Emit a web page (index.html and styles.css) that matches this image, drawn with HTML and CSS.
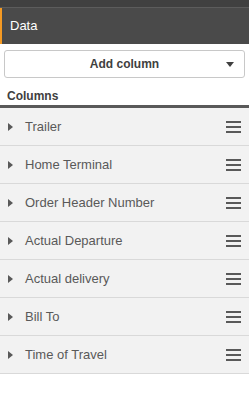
FILE: index.html
```html
<!DOCTYPE html>
<html>
<head lang="en">
    <meta charset="UTF-8">
    <title>Data</title>
    <link rel="stylesheet" href="styles.css">
</head>
<body>
<div id="panel">
    <div id="topbar"></div>
    <div id="header">Data</div>
    <div id="add">
        <span class="add-label">Add column</span>
        <span class="caret"></span>
    </div>
    <div id="title">Columns</div>
    <ul id="columns">
        <li><span class="arrow"></span><span class="name">Trailer</span><span class="drag"><i></i><i></i><i></i></span></li>
        <li><span class="arrow"></span><span class="name">Home Terminal</span><span class="drag"><i></i><i></i><i></i></span></li>
        <li><span class="arrow"></span><span class="name">Order Header Number</span><span class="drag"><i></i><i></i><i></i></span></li>
        <li><span class="arrow"></span><span class="name">Actual Departure</span><span class="drag"><i></i><i></i><i></i></span></li>
        <li><span class="arrow"></span><span class="name">Actual delivery</span><span class="drag"><i></i><i></i><i></i></span></li>
        <li><span class="arrow"></span><span class="name">Bill To</span><span class="drag"><i></i><i></i><i></i></span></li>
        <li><span class="arrow"></span><span class="name">Time of Travel</span><span class="drag"><i></i><i></i><i></i></span></li>
    </ul>
</div>
</body>
</html>
```

FILE: styles.css
```css
* {
    margin: 0;
    padding: 0;
    box-sizing: border-box;
}

ul {
    list-style: none;
}

body {
    background: #fff;
    font-family: "Liberation Sans", Arial, sans-serif;
    font-size: 13px;
}

#topbar {
    height: 8px;
    background-color: #404040;
    border-bottom: 1px solid #5c5c5c;
}

#header {
    height: 36px;
    padding-left: 8px;
    background-color: #4a4a4a;
    border-left: 2px solid #f59a23;
    color: #fff;
    line-height: 36px;
}

#add {
    display: flex;
    align-items: center;
    height: 28px;
    margin: 6px 4px 0;
    border: 1px solid #c8c8c8;
    border-radius: 3px;
    color: #404040;
    position: relative;
}

#add .add-label {
    flex: 1;
    text-align: center;
    font-weight: bold;
    font-size: 12px;
}

#add .caret {
    position: absolute;
    right: 10px;
    top: 11px;
    border-left: 4px solid transparent;
    border-right: 4px solid transparent;
    border-top: 5px solid #404040;
}

#title {
    padding: 11px 0 0 7px;
    height: 27px;
    font-size: 12px;
    font-weight: bold;
    color: #404040;
    line-height: 15px;
}

#columns {
    border-top: 3px solid #595959;
}

#columns li {
    display: flex;
    align-items: center;
    height: 38px;
    padding: 0 8px;
    background-color: #f2f2f2;
    border-bottom: 1px solid #d9d9d9;
    color: #595959;
}

#columns .arrow {
    width: 0;
    height: 0;
    border-top: 4px solid transparent;
    border-bottom: 4px solid transparent;
    border-left: 5px solid #595959;
    margin-right: 12px;
}

#columns .name {
    flex: 1;
}

#columns .drag {
    display: flex;
    flex-direction: column;
    gap: 3px;
    width: 15px;
}

#columns .drag i {
    display: block;
    height: 2px;
    background-color: #595959;
}
```
